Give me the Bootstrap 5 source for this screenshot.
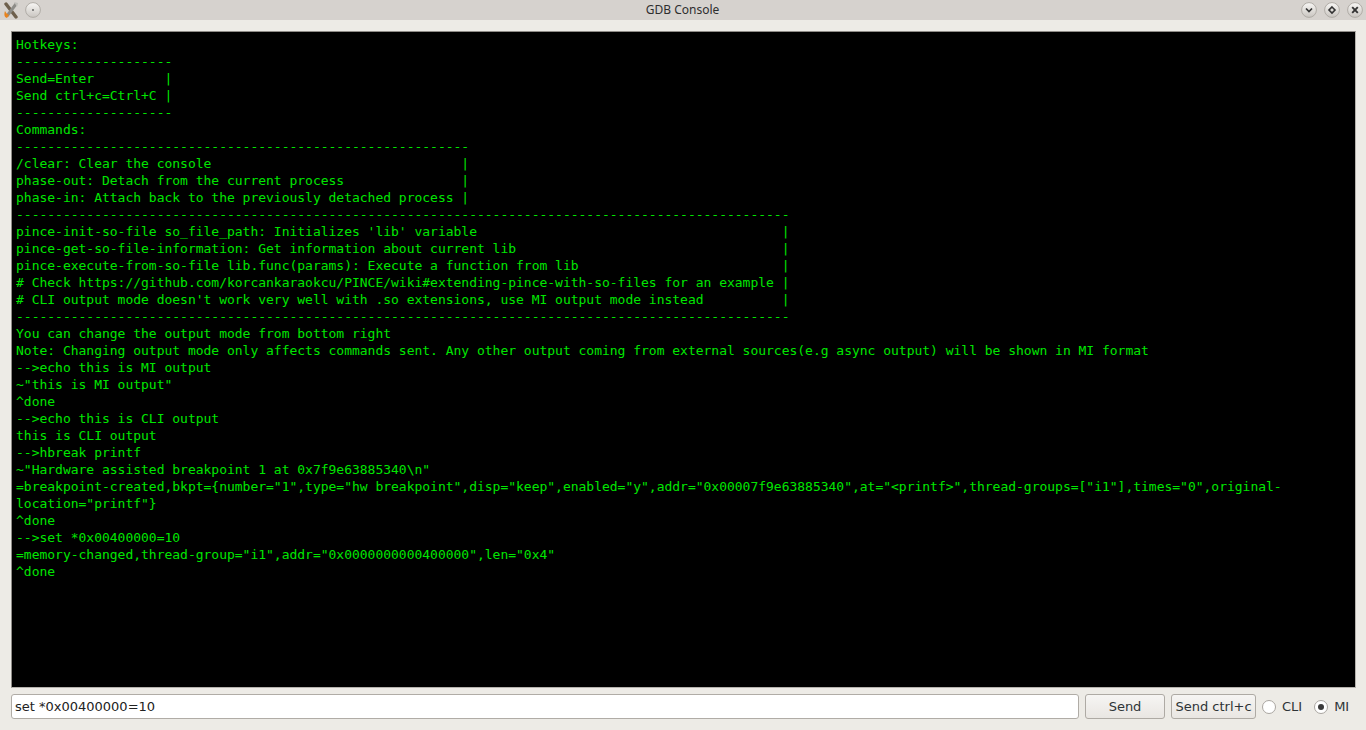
<!DOCTYPE html>
<html lang="en">
<head>
<meta charset="utf-8">
<title>GDB Console</title>
<link href="https://cdn.jsdelivr.net/npm/bootstrap@5.3.0/dist/css/bootstrap.min.css" rel="stylesheet">
<style>
html,body{height:730px;overflow:hidden;background:#edebe6;font-family:"DejaVu Sans",sans-serif;font-size:13px;color:#2e3436}
.titlebar{height:20px;background:#d6d2ce;color:#2e2e2e;font-family:"Noto Sans",sans-serif;font-size:12px;line-height:20px}
.tb-side{width:200px}
.tb-left{padding-left:2px;gap:5px}
.tb-right{padding-right:3px;gap:7px}
.tb-title{flex:1;text-align:center;padding-right:1px}
.client{height:710px;padding:11px 10px 0 11px}
.console{height:657px;background:#000;border:1px solid #8f8c87;border-right-color:#b5b2ad;border-bottom-color:#b5b2ad;padding:4px 4px;overflow:hidden}
.console pre{margin:0;font-family:"DejaVu Sans Mono",monospace;font-size:13px;line-height:17px;letter-spacing:-.014px;color:#00e600;white-space:pre-wrap;overflow:hidden}
.inputrow{margin-top:6px;height:26px;gap:6px;padding-right:0}
.cmd{flex:none;width:1068px;height:25px;border:1px solid #b0aca6;border-radius:3px;background:#fff;padding:0 3px;font-size:13px;color:#222;line-height:23px;box-shadow:none;font-family:"DejaVu Sans",sans-serif}
.cmd:focus{border-color:#b0aca6;box-shadow:none;outline:0}
.qbtn{flex:none;height:25px;padding:0;border:1px solid #aeaaa4;border-radius:3px;background:linear-gradient(#f6f5f3,#e9e6e2);color:#2e3436;font-size:13px;line-height:23px;font-family:"DejaVu Sans",sans-serif}
.qbtn:hover,.qbtn:active{background:linear-gradient(#f6f5f3,#e9e6e2);border-color:#aeaaa4;color:#2e3436}
.w-send{width:80px}
.w-ctrl{width:85px}
.radios{margin-left:0;gap:12px;height:25px}
.rd{gap:6px;line-height:25px;font-size:13px;color:#2e3436}
.rd svg{display:block}
</style>
</head>
<body>
<div class="titlebar d-flex align-items-center">
  <div class="tb-side tb-left d-flex align-items-center">
    <svg width="18" height="18" viewBox="0 0 18 18" aria-hidden="true">
      <path d="M4 3 L14 16" stroke="#6d5f4c" stroke-width="3.4" stroke-linecap="round"/>
      <path d="M14 3 L5 15" stroke="#8d8c88" stroke-width="3"/>
      <path d="M3 10 C2 13 2 16 5 17 L7 14 C5 13 4 12 3 10 Z" fill="#e8831e"/>
      <path d="M12 1 L16 2 L15 6 Z" fill="#bdbcb8"/>
    </svg>
    <svg width="16" height="16" viewBox="0 0 16 16" aria-hidden="true">
      <defs><linearGradient id="g0" x1="0" y1="0" x2="0" y2="1"><stop offset="0" stop-color="#f8f7f5"/><stop offset="1" stop-color="#c9c5c0"/></linearGradient></defs>
      <circle cx="8" cy="8" r="7.4" fill="url(#g0)" stroke="#b0aca6"/>
      <circle cx="8" cy="8" r="1" fill="#666"/>
    </svg>
  </div>
  <div class="tb-title">GDB Console</div>
  <div class="tb-side tb-right d-flex align-items-center justify-content-end">
    <svg width="16" height="16" viewBox="0 0 16 16" aria-hidden="true">
      <circle cx="8" cy="8" r="7.4" fill="url(#g0)" stroke="#b0aca6"/>
      <path d="M5 6.5 L8 9.5 L11 6.5" fill="none" stroke="#333" stroke-width="1.7"/>
    </svg>
    <svg width="16" height="16" viewBox="0 0 16 16" aria-hidden="true">
      <circle cx="8" cy="8" r="7.4" fill="url(#g0)" stroke="#b0aca6"/>
      <path d="M8 5 L11 8 L8 11 L5 8 Z" fill="none" stroke="#333" stroke-width="1.6"/>
    </svg>
    <svg width="16" height="16" viewBox="0 0 16 16" aria-hidden="true">
      <circle cx="8" cy="8" r="7.4" fill="url(#g0)" stroke="#b0aca6"/>
      <path d="M5.2 5.2 L10.8 10.8 M10.8 5.2 L5.2 10.8" fill="none" stroke="#333" stroke-width="1.9"/>
    </svg>
  </div>
</div>
<div class="client d-flex flex-column">
  <div class="console"><pre>Hotkeys:
--------------------
Send=Enter         |
Send ctrl+c=Ctrl+C |
--------------------
Commands:
----------------------------------------------------------
/clear: Clear the console                                |
phase-out: Detach from the current process               |
phase-in: Attach back to the previously detached process |
---------------------------------------------------------------------------------------------------
pince-init-so-file so_file_path: Initializes 'lib' variable                                       |
pince-get-so-file-information: Get information about current lib                                  |
pince-execute-from-so-file lib.func(params): Execute a function from lib                          |
# Check https://github.com/korcankaraokcu/PINCE/wiki#extending-pince-with-so-files for an example |
# CLI output mode doesn't work very well with .so extensions, use MI output mode instead          |
---------------------------------------------------------------------------------------------------
You can change the output mode from bottom right
Note: Changing output mode only affects commands sent. Any other output coming from external sources(e.g async output) will be shown in MI format
--&gt;echo this is MI output
~"this is MI output"
^done
--&gt;echo this is CLI output
this is CLI output
--&gt;hbreak printf
~"Hardware assisted breakpoint 1 at 0x7f9e63885340\n"
=breakpoint-created,bkpt={number="1",type="hw breakpoint",disp="keep",enabled="y",addr="0x00007f9e63885340",at="&lt;printf&gt;",thread-groups=["i1"],times="0",original-location="printf"}
^done
--&gt;set *0x00400000=10
=memory-changed,thread-group="i1",addr="0x0000000000400000",len="0x4"
^done</pre></div>
  <div class="inputrow d-flex align-items-start">
    <input class="cmd form-control" type="text" value="set *0x00400000=10" aria-label="Command">
    <button type="button" class="qbtn w-send btn">Send</button>
    <button type="button" class="qbtn w-ctrl btn">Send ctrl+c</button>
    <div class="radios d-flex align-items-center">
      <div class="rd d-flex align-items-center">
        <svg width="14" height="14" viewBox="0 0 14 14" aria-hidden="true"><circle cx="7" cy="7" r="6.5" fill="#fff" stroke="#a9a5a0"/></svg>
        <span>CLI</span>
      </div>
      <div class="rd d-flex align-items-center">
        <svg width="14" height="14" viewBox="0 0 14 14" aria-hidden="true"><circle cx="7" cy="7" r="6.5" fill="#fff" stroke="#a9a5a0"/><circle cx="7" cy="7" r="3" fill="#3a3a3a"/></svg>
        <span>MI</span>
      </div>
    </div>
  </div>
</div>
<script src="https://cdn.jsdelivr.net/npm/bootstrap@5.3.0/dist/js/bootstrap.bundle.min.js"></script>
</body>
</html>
